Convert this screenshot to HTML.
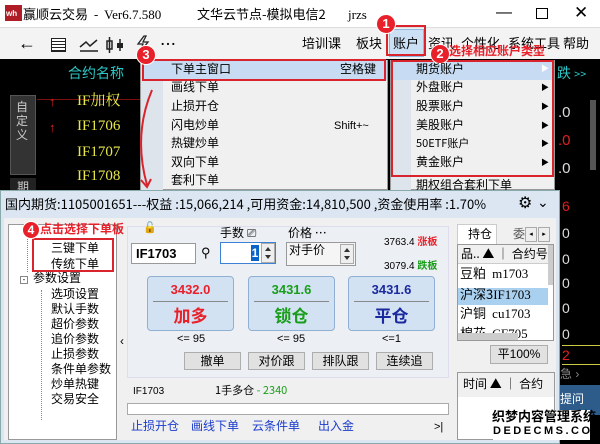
<!DOCTYPE html>
<html><head><meta charset="utf-8"><style>
*{margin:0;padding:0;box-sizing:border-box}
body{width:600px;height:444px;overflow:hidden;position:relative;background:#000;font-family:"Liberation Sans","Noto Sans CJK SC",sans-serif;font-size:12px;color:#000}
.a{position:absolute;white-space:nowrap;line-height:1.2}
.c{font-family:"Noto Sans CJK SC","WenQuanYi Zen Hei",sans-serif}
.mono{font-family:"Liberation Serif","Noto Serif CJK SC",serif}
.badge{position:absolute;width:20px;height:20px;border-radius:50%;background:#e8202a;color:#fff;font-weight:bold;font-size:13px;text-align:center;line-height:18px;border:1px solid #fff}
.rb{position:absolute;border:2px solid #d9232d}
.btn{position:absolute;background:#e1e1e1;border:1px solid #adadad;text-align:center;font-size:12px;line-height:15px}
.big{position:absolute;background:#d3e2f3;border:1px solid #8fb0d3;border-radius:4px;text-align:center;line-height:1.2}
.sp{position:absolute;width:14px;height:20px;background:#eee;border:1px solid #aaa}
.sp:before{content:"";position:absolute;left:3px;top:3px;border:3px solid transparent;border-bottom:4px solid #333;border-top:0}
.sp:after{content:"";position:absolute;left:3px;bottom:3px;border:3px solid transparent;border-top:4px solid #333;border-bottom:0}
</style></head><body>
<!-- title bar -->
<div class="a" style="left:0;top:0;width:600px;height:27px;background:#fff"></div>
<div class="a" style="left:5px;top:5px;width:17px;height:16px;background:#b01c26"></div>
<div class="a" style="left:6px;top:9px;font-size:8px;color:#fff;font-weight:bold">wh</div>
<div class="a c" style="left:23px;top:6px;font-size:13px">赢顺云交易 &nbsp;- &nbsp;<span class="mono">Ver6.7.580</span></div>
<div class="a c" style="left:197px;top:6px;font-size:13px">文华云节点-模拟电信2</div>
<div class="a mono" style="left:348px;top:7px;font-size:13px">jrzs</div>
<div class="a" style="left:496px;top:3px;font-size:16px">—</div>
<div class="a" style="left:536px;top:8px;width:12px;height:11px;border:1px solid #000"></div>
<div class="a" style="left:574px;top:3px;font-size:17px">✕</div>
<!-- toolbar -->
<div class="a" style="left:0;top:27px;width:600px;height:32px;background:#f3f3f3;border-top:1px solid #ddd"></div>
<div class="a" style="left:18px;top:33px;font-size:18px">←</div>
<div class="a" style="left:51px;top:38px;width:15px;height:14px;border:1.5px solid #222;background:repeating-linear-gradient(#fff 0 2px,#222 2px 3px)"></div>
<svg class="a" style="left:78px;top:37px" width="22" height="16"><path d="M2 10 L8 5 L12 9 L19 3" stroke="#222" fill="none" stroke-width="1.5"/><path d="M2 14 H20" stroke="#222" stroke-width="1.5"/></svg>
<svg class="a" style="left:105px;top:35px" width="22" height="20"><rect x="2" y="6" width="5" height="8" stroke="#222" fill="none" stroke-width="1.5"/><path d="M4.5 2V18M15 4V16" stroke="#222" stroke-width="1.5"/><rect x="12" y="8" width="6" height="5" fill="#222"/></svg>
<svg class="a" style="left:135px;top:34px" width="16" height="20"><path d="M9 2 L3 10 H8 L5 18 L13 8 H8 L11 2Z" stroke="#222" fill="none" stroke-width="1.3"/></svg>
<div class="a" style="left:160px;top:36px;font-size:16px">⋯</div>
<div class="a c" style="left:302px;top:35px;font-size:13px">培训课</div>
<div class="a c" style="left:356px;top:35px;font-size:13px">板块</div>
<div class="a" style="left:389px;top:29px;width:35px;height:28px;background:#cce0f5;border:1px solid #8fb8e0"></div>
<div class="a c" style="left:393px;top:35px;font-size:13px">账户</div>
<div class="a c" style="left:428px;top:35px;font-size:13px">资讯</div>
<div class="a c" style="left:461px;top:35px;font-size:13px">个性化</div>
<div class="a c" style="left:508px;top:35px;font-size:13px">系统工具</div>
<div class="a c" style="left:563px;top:35px;font-size:13px">帮助</div>
<div class="rb" style="left:386px;top:25px;width:40px;height:31px"></div>
<div class="badge" style="left:376px;top:14px">1</div>
<!-- dark area -->
<div class="a" style="left:37px;top:99px;width:103px;height:1px;background:#7a1010"></div>
<div class="a" style="left:10px;top:95px;width:26px;height:80px;background:#333;border:1px solid #555"></div>
<div class="a c" style="left:16px;top:100px;font-size:12px;color:#ccc;width:14px;white-space:normal;line-height:14px">自定义</div>
<div class="a" style="left:10px;top:178px;width:26px;height:12px;background:#222"></div>
<div class="a c" style="left:68px;top:65px;font-size:14px;color:#2bc7c7">合约名称</div>
<div class="a" style="left:49px;top:94px;color:#e02020;font-size:13px">↑</div>
<div class="a" style="left:49px;top:120px;color:#e02020;font-size:13px">↑</div>
<div class="a mono" style="left:77px;top:92px;font-size:15px;color:#e8e84a">IF加权</div>
<div class="a mono" style="left:77px;top:117px;font-size:15px;color:#e8e84a">IF1706</div>
<div class="a mono" style="left:77px;top:143px;font-size:15px;color:#e8e84a">IF1707</div>
<div class="a mono" style="left:77px;top:167px;font-size:15px;color:#e8e84a">IF1708</div>
<div class="a c" style="left:17px;top:180px;font-size:12px;color:#ccc">期</div>
<!-- right dark strip -->
<div class="a c" style="left:557px;top:65px;font-size:14px;color:#2bc7c7">跌 <span style="font-size:11px">&gt;&gt;</span></div>
<div class="a" style="left:590px;top:100px;width:6px;height:70px;background:#555"></div>
<div class="a" style="left:558px;top:104px;color:#ddd;font-size:15px">.0</div>
<div class="a" style="left:558px;top:132px;color:#e02020;font-size:15px">.0</div>
<div class="a" style="left:558px;top:160px;color:#ddd;font-size:15px">.0</div>
<div class="a" style="left:562px;top:198px;color:#e02020;font-size:14px">6</div>
<div class="a" style="left:562px;top:225px;color:#ddd;font-size:14px">0</div>
<div class="a" style="left:562px;top:251px;color:#ddd;font-size:14px">0</div>
<div class="a" style="left:562px;top:275px;color:#ddd;font-size:14px">0</div>
<div class="a" style="left:562px;top:300px;color:#ddd;font-size:14px">0</div>
<div class="a" style="left:562px;top:326px;color:#ddd;font-size:14px">0</div>
<div class="a" style="left:562px;top:345px;width:38px;height:1px;background:#cc4"></div>
<div class="a" style="left:562px;top:347px;color:#e02020;font-size:14px">2</div>
<div class="a" style="left:562px;top:364px;width:38px;height:1px;background:#cc4"></div>
<div class="a" style="left:560px;top:367px;color:#888;font-size:12px">急 ›</div>
<div class="a" style="left:560px;top:385px;width:40px;height:30px;background:#2d5c8a"></div>
<div class="a c" style="left:560px;top:392px;color:#fff;font-size:12px">提问</div>
<!-- menu 1 -->
<div class="a" style="left:140px;top:60px;width:248px;height:130px;background:#f0f0f0;border:1px solid #999"></div>
<div class="a" style="left:141px;top:61px;width:22px;height:129px;background:#dde4ec"></div>
<div class="a" style="left:142px;top:60px;width:245px;height:20px;background:#c7dcf2"></div>
<div class="rb" style="left:142px;top:59px;width:244px;height:22px"></div>
<div class="badge" style="left:136px;top:45px">3</div>
<div class="a c" style="left:171px;top:62px">下单主窗口</div>
<div class="a c" style="left:340px;top:62px">空格键</div>
<div class="a c" style="left:171px;top:80px">画线下单</div>
<div class="a c" style="left:171px;top:99px">止损开仓</div>
<div class="a c" style="left:171px;top:118px">闪电炒单</div>
<div class="a" style="left:334px;top:120px;font-size:11px">Shift+~</div>
<div class="a c" style="left:171px;top:136px">热键炒单</div>
<div class="a c" style="left:171px;top:155px">双向下单</div>
<div class="a c" style="left:171px;top:173px">套利下单</div>
<svg class="a" style="left:125px;top:85px" width="40" height="110"><path d="M27 5 Q8 50 22 100" stroke="#d9232d" stroke-width="2" fill="none"/><path d="M16 95 L22 102 L26 94" stroke="#d9232d" stroke-width="2" fill="none"/></svg>
<!-- menu 2 -->
<div class="a" style="left:390px;top:60px;width:165px;height:130px;background:#f0f0f0;border:1px solid #999"></div>
<div class="a" style="left:391px;top:61px;width:20px;height:129px;background:#dde4ec"></div>
<div class="a" style="left:392px;top:61px;width:160px;height:19px;background:#c7dcf2"></div>
<div class="rb" style="left:391px;top:60px;width:163px;height:117px"></div>
<div class="badge" style="left:430px;top:44px">2</div>
<div class="a c" style="left:449px;top:44px;font-size:12px;color:#e8202a;font-weight:bold">选择相应账户类型</div>
<div class="a c" style="left:416px;top:62px">期货账户</div>
<div class="a c" style="left:416px;top:80px">外盘账户</div>
<div class="a c" style="left:416px;top:99px">股票账户</div>
<div class="a c" style="left:416px;top:118px">美股账户</div>
<div class="a c" style="left:416px;top:137px;font-size:11px">50ETF账户</div>
<div class="a c" style="left:416px;top:155px">黄金账户</div>
<div class="a c" style="left:416px;top:178px">期权组合套利下单</div>
<div class="a" style="left:541px;top:64px;font-size:8px;color:#fff">▶</div>
<div class="a" style="left:541px;top:83px;font-size:8px">▶</div>
<div class="a" style="left:541px;top:102px;font-size:8px">▶</div>
<div class="a" style="left:541px;top:121px;font-size:8px">▶</div>
<div class="a" style="left:541px;top:139px;font-size:8px">▶</div>
<div class="a" style="left:541px;top:158px;font-size:8px">▶</div>
<!-- order window -->
<div class="a" style="left:0;top:190px;width:560px;height:254px;background:#dbe6f2;border:1px solid #8aa"></div>
<div class="a c" style="left:5px;top:196px;font-size:13px">国内期货:1105001651---权益 :15,066,214 ,可用资金:14,810,500 ,资金使用率 :1.70%</div>
<div class="a" style="left:518px;top:194px;font-size:16px">⚙</div>
<div class="a" style="left:537px;top:194px;font-size:14px">⌄</div>
<div class="a" style="left:4px;top:218px;width:552px;height:222px;background:#f0f0f0"></div>
<!-- tree -->
<div class="a" style="left:8px;top:224px;width:109px;height:216px;background:#fff;border:1px solid #999"></div>
<div class="a" style="left:27px;top:232px;width:1px;height:40px;border-left:1px dotted #888"></div>
<div class="a" style="left:41px;top:290px;width:1px;height:130px;border-left:1px dotted #888"></div>
<div class="a" style="left:20px;top:276px;width:8px;height:8px;border:1px solid #888;font-size:8px;line-height:6px;text-align:center">-</div>
<div class="a c" style="left:33px;top:271px">参数设置</div>
<div class="a c" style="left:51px;top:241px">三键下单</div>
<div class="a c" style="left:51px;top:257px">传统下单</div>
<div class="rb" style="left:32px;top:238px;width:82px;height:34px"></div>
<div class="badge" style="left:22px;top:221px;width:18px;height:18px;line-height:16px;font-size:12px">4</div>
<div class="a c" style="left:40px;top:222px;color:#e8202a;font-weight:bold">点击选择下单板</div>
<div class="a c" style="left:51px;top:287px">选项设置</div>
<div class="a c" style="left:51px;top:302px">默认手数</div>
<div class="a c" style="left:51px;top:317px">超价参数</div>
<div class="a c" style="left:51px;top:332px">追价参数</div>
<div class="a c" style="left:51px;top:347px">止损参数</div>
<div class="a c" style="left:51px;top:362px">条件单参数</div>
<div class="a c" style="left:51px;top:377px">炒单热键</div>
<div class="a c" style="left:51px;top:392px">交易安全</div>
<div class="a" style="left:120px;top:334px">‹</div>
<!-- center panel -->
<div class="a" style="left:127px;top:226px;width:322px;height:152px;background:#eceff3;border:1px solid #dde"></div>
<div class="a" style="left:143px;top:222px;font-size:11px">🔓</div>
<div class="a c" style="left:220px;top:226px">手数 ⎚</div>
<div class="a c" style="left:288px;top:226px">价格 …</div>
<div class="a" style="left:131px;top:243px;width:65px;height:21px;background:#fff;border:1px solid #999;font-weight:bold;font-size:13px;padding:2px 4px">IF1703</div>
<div class="a" style="left:201px;top:245px;font-size:13px">⚲</div>
<div class="a" style="left:220px;top:242px;width:56px;height:22px;background:#fff;border:1px solid #3b82d6"></div>
<div class="a" style="left:251px;top:245px;width:8px;height:16px;background:#0a64c8;color:#fff;font-size:12px;text-align:center;font-weight:bold;line-height:16px">1</div>
<div class="sp" style="left:261px;top:243px"></div>
<div class="a" style="left:286px;top:242px;width:70px;height:24px;background:#f5f5f5;border:1px solid #999"></div>
<div class="a c" style="left:289px;top:243px">对手价</div>
<div class="sp" style="left:340px;top:244px"></div>
<div class="a" style="left:384px;top:235px;font-size:10px">3763.4 <b class="c" style="color:#e8202a">涨板</b></div>
<div class="a" style="left:384px;top:259px;font-size:10px">3079.4 <b class="c" style="color:#1a9e1a">跌板</b></div>
<div class="big" style="left:147px;top:276px;width:87px;height:55px"><div style="color:#e8202a;font-weight:bold;font-size:13px;margin-top:5px">3432.0</div><div style="height:1px;background:#888;margin:3px 5px"></div><div class="c" style="color:#e8202a;font-weight:bold;font-size:17px">加多</div></div>
<div class="big" style="left:248px;top:276px;width:87px;height:55px"><div style="color:#1a9e1a;font-weight:bold;font-size:13px;margin-top:5px">3431.6</div><div style="height:1px;background:#888;margin:3px 5px"></div><div class="c" style="color:#1a9e1a;font-weight:bold;font-size:17px">锁仓</div></div>
<div class="big" style="left:348px;top:276px;width:87px;height:55px"><div style="color:#1a2a9e;font-weight:bold;font-size:13px;margin-top:5px">3431.6</div><div style="height:1px;background:#888;margin:3px 5px"></div><div class="c" style="color:#1a2a9e;font-weight:bold;font-size:17px">平仓</div></div>
<div class="a" style="left:177px;top:333px;font-size:11px">&lt;= 95</div>
<div class="a" style="left:277px;top:333px;font-size:11px">&lt;= 95</div>
<div class="a" style="left:382px;top:333px;font-size:11px">&lt;=1</div>
<div class="btn c" style="left:184px;top:352px;width:57px;height:18px">撤单</div>
<div class="btn c" style="left:248px;top:352px;width:57px;height:18px">对价跟</div>
<div class="btn c" style="left:312px;top:352px;width:57px;height:18px">排队跟</div>
<div class="btn c" style="left:376px;top:352px;width:57px;height:18px">连续追</div>
<div class="a" style="left:133px;top:386px;font-size:10px">IF1703</div>
<div class="a c" style="left:215px;top:384px;font-size:11px">1手多仓 <span style="color:#1a9e1a">- 2340</span></div>
<div class="a" style="left:127px;top:403px;width:322px;height:12px;background:#fff;border:1px solid #aaa"></div>
<div class="a c" style="left:131px;top:419px;color:#1a3ccc">止损开仓</div>
<div class="a c" style="left:191px;top:419px;color:#1a3ccc">画线下单</div>
<div class="a c" style="left:252px;top:419px;color:#1a3ccc">云条件单</div>
<div class="a c" style="left:318px;top:419px;color:#1a3ccc">出入金</div>
<div class="a" style="left:434px;top:421px;font-size:11px">&gt;|</div>
<!-- right panel -->
<div class="a" style="left:457px;top:224px;width:40px;height:21px;background:#fff;border:1px solid #ccc;border-bottom:none"></div>
<div class="a c" style="left:468px;top:227px">持仓</div>
<div class="a c" style="left:513px;top:227px;color:#555">委</div>
<div class="a" style="left:525px;top:227px;width:12px;height:15px;border:1px solid #aaa;background:#eee;font-size:7px;line-height:14px;text-align:center">◂</div>
<div class="a" style="left:538px;top:227px;width:12px;height:15px;border:1px solid #aaa;background:#eee;font-size:7px;line-height:14px;text-align:center">▸</div>
<div class="a" style="left:457px;top:244px;width:97px;height:97px;border:1px solid #999;background:#fff;overflow:hidden">
 <div style="position:absolute;left:0;top:0;width:95px;height:19px;background:#f0f0f0;border-bottom:1px solid #ccc"></div>
 <div class="a c" style="left:3px;top:2px">品.. ▲ │ 合约号</div>
 <div style="position:absolute;left:0;top:43px;width:90px;height:17px;background:#a9d0ef"></div>
 <div class="a c" style="left:2px;top:20px;font-size:13px">豆粕 <span class="mono">&nbsp;m1703</span></div>
 <div class="a c" style="left:2px;top:41px;font-size:13px">沪深3<span class="mono">IF1703</span></div>
 <div class="a c" style="left:2px;top:60px;font-size:13px">沪铜 <span class="mono">&nbsp;cu1703</span></div>
 <div class="a c" style="left:2px;top:80px;font-size:13px">棉花 <span class="mono">&nbsp;CF705</span></div>
 <div style="position:absolute;left:0;top:88px;width:60px;height:8px;background:#ccc"></div>
 <div style="position:absolute;left:90px;top:0;width:5px;height:40px;background:#ccc"></div>
</div>
<div class="btn" style="left:490px;top:345px;width:58px;height:19px;line-height:17px">平100%</div>
<div class="a" style="left:457px;top:372px;width:98px;height:68px;border:1px solid #999;background:#fff"></div>
<div class="a" style="left:458px;top:373px;width:96px;height:24px;background:#f0f0f0"></div>
<div class="a c" style="left:463px;top:377px">时间 ▲ │ 合约</div>
<!-- watermark -->
<div class="a" style="left:493px;top:410px;width:97px;height:30px;background:#fff"></div>
<div class="a c" style="left:492px;top:408px;font-size:13px;font-weight:bold">织梦内容管理系统</div>
<div class="a" style="left:493px;top:425px;font-size:11px;font-weight:bold;letter-spacing:2.5px">DEDECMS.COM</div>
</body></html>
